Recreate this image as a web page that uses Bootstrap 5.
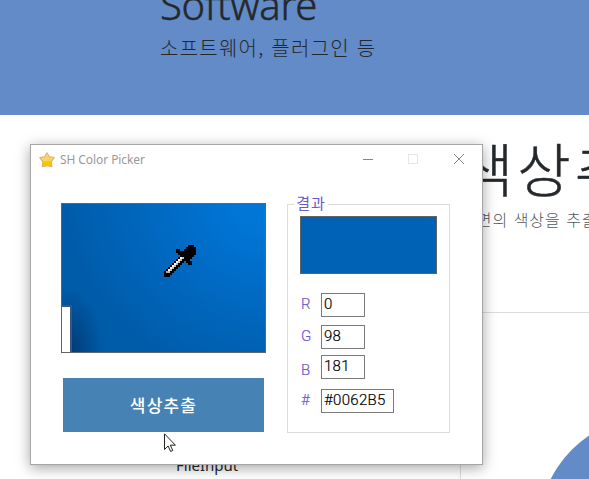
<!DOCTYPE html>
<html lang="ko">
<head>
<meta charset="utf-8">
<meta name="viewport" content="width=device-width, initial-scale=1">
<title>SH Color Picker</title>
<link href="https://cdn.jsdelivr.net/npm/bootstrap@5.3.0/dist/css/bootstrap.min.css" rel="stylesheet">
<style>
body{width:589px;height:479px;font-family:"Noto Sans","Noto Sans CJK KR",sans-serif;font-weight:400;color:#25282b}
.page{height:479px}
.hero{height:115px;background:#628bc7;padding-left:160px}
.hero h1{font-size:40px;line-height:48px;font-weight:300;-webkit-text-stroke:.5px #25282b;margin:-19px 0 0;letter-spacing:-.3px;white-space:nowrap}
.hero p{font-family:"Noto Sans CJK KR",sans-serif;font-size:20px;line-height:30px;margin:4px 0 0;white-space:nowrap;font-weight:300;letter-spacing:1.25px}
.side{width:461px}
.side-item{font-size:15px;line-height:24px;margin:338px 0 0 176px;letter-spacing:0}
.side-line{height:16px;width:1px;background:#dcdcdc;margin-left:460px;margin-top:-14px}
.content{min-width:0}
.content h2{font-family:"Noto Sans CJK KR",sans-serif;font-size:58px;line-height:70px;font-weight:300;-webkit-text-stroke:.5px #25282b;white-space:nowrap;margin:17px 0 0 -1px;letter-spacing:4px}
.content .desc{font-family:"Noto Sans CJK KR",sans-serif;font-size:16px;line-height:24px;font-weight:300;color:#50575e;white-space:nowrap;margin:5px 0 0 0;letter-spacing:1px}
.rule{height:1px;background:#dcdcdc;margin-top:81px}
.disc{width:234px;height:234px;border-radius:50%;background:#628bc7;margin:102px 0 0 77px}
.win{position:absolute;left:30px;top:144px;width:453px;height:321px;background:#fff;border:1px solid #a6a6a6;box-shadow:0 3px 13px rgba(0,0,0,.36)}
.titlebar{height:29px;padding-left:8px;font-size:12px;color:#999}
.titlebar .name{margin-left:5px;letter-spacing:-.08px}
.preview{width:205px;height:150px;border:1px solid #646464;background:radial-gradient(ellipse 32px 60px at 8px 145px,rgba(0,40,90,.6),rgba(0,60,120,0)),radial-gradient(ellipse 250px 230px at 215px -15px,#0079dc 0%,#0075d5 20%,#006bc5 45%,#0063b6 66%,#005cab 85%,#005aa6 100%)}
.notch{width:10px;height:47px;background:#fff;border:solid #38577a;border-width:2px 2px 0 0}
.pick{width:201px;height:54px;background:#4682b4;border-radius:0;border:0;font:500 17px/52px "Noto Sans CJK KR",sans-serif;letter-spacing:1.2px;margin:25px 0 0 2px;padding:0}
.left-col{padding:29px 0 0 30px;width:256px}
.group{width:163px;height:229px;border:1px solid #dcdcdc;margin-top:30px;padding:11px 0 0 12px}
.group legend{position:absolute;left:263px;top:49px;width:34px;height:17px;background:#fff;font:400 15px/17px "Noto Sans CJK KR",sans-serif;color:#6a5acd;text-align:center;margin:0;letter-spacing:1px}
.swatch{width:137px;height:58px;background:#0062b5;border:1px solid #646464;margin-bottom:19px}
.line{height:24px;font-family:Roboto,sans-serif;font-size:15px;font-weight:300}
.line label{width:21px;color:#6a5acd;-webkit-text-stroke:.2px #6a5acd;padding-left:1px;line-height:22px}
.line input{width:44px;height:24px;border:1px solid #7a7a7a;border-radius:0;padding:0 0 3px 2px;font-size:15px;font-weight:300;-webkit-text-stroke:.2px #000;line-height:20px;color:#000;font-family:inherit;min-height:0;letter-spacing:.3px}
.line input.hex{width:73px}
.gap-g{margin-top:8px}
.gap-b{margin-top:6px}
.gap-x{margin-top:10px}
.dropper{position:absolute;left:164px;top:245px}
.pointer{position:absolute;left:164px;top:433px}
</style>
</head>
<body class="bg-white overflow-hidden m-0">
<div class="page overflow-hidden">
  <header class="hero overflow-hidden"><h1>Software</h1><p>소프트웨어, 플러그인 등</p></header>
  <div class="d-flex">
    <aside class="side flex-shrink-0"><div class="side-item">FileInput</div><div class="side-line"></div></aside>
    <main class="content flex-grow-1"><h2>색상추출</h2><p class="desc mb-0">화면의 색상을 추출</p><div class="rule"></div><div class="disc"></div></main>
  </div>
</div>
<section class="win">
  <div class="titlebar d-flex align-items-center">
    <svg width="16" height="16" viewBox="0 0 16 16"><defs><linearGradient id="g" x2="0" y2="1"><stop stop-color="#f5d883"/><stop offset=".55" stop-color="#f8d35a"/><stop offset=".65" stop-color="#f8c800"/><stop offset="1" stop-color="#f2c100"/></linearGradient></defs><path d="M8 .8 10.3 4.800 15.3 5.600 12.300 9.6 12.8 14.7 8 13.800 3.2 14.7 3.700 9.6.7 5.600 5.7 4.800Z" fill="url(#g)" stroke="#dfb26a" stroke-width="1.1" stroke-linejoin="round"/></svg>
    <span class="name">SH Color Picker</span>
    <svg class="ms-auto" width="121" height="29" fill="none"><path d="M2 14.5h10" stroke="#888"/><rect x="47.500" y="9.500" width="9" height="9" stroke="#e6e6e6"/><path d="m93 9 10 10m0-10-10 10" stroke="#888"/></svg>
  </div>
  <div class="d-flex">
    <div class="left-col"><div class="preview d-flex align-items-end"><div class="notch"></div></div><button class="pick btn btn-primary">색상추출</button></div>
    <form class="group"><legend>결과</legend><div class="swatch"></div>
      <div class="line d-flex"><label>R</label><input class="form-control" value="0"></div>
      <div class="line gap-g d-flex"><label>G</label><input class="form-control" value="98"></div>
      <div class="line gap-b d-flex"><label class="pt-1">B</label><input class="form-control" value="181"></div>
      <div class="line gap-x d-flex"><label>#</label><input class="form-control hex" value="#0062B5"></div>
    </form>
  </div>
</section>
<svg class="dropper" width="32" height="32" viewBox="0 0 16 16" shape-rendering="crispEdges"><path d="M12 0h3v1h1v4h-1v1h-1v1h-1v1h1v2h-2v-1h-1v-1h-1v1H9v1H8v1H7v1H6v1H5v1H4v1H3v1H0v-3h1v-1h1v-1h1v-1h1V9h1V8h1V7h1V6h1V5H7V4H6V2h2v1h2V2h1V1h1Z"/><path d="M1 13h1v-1h1v-1h1v-1h1V9h1V8h1V7h1V6h2v1H9v1H8v1H7v1H6v1H5v1H4v1H3v1H1Z" fill="#aaa"/><path d="M2 12h1v-1h1v-1h1V9h1V8h1V7h1V6h2v1H9v1H8v1H7v1H6v1H5v1H4v1H3v1H2Z" fill="#bbb"/><path d="M2 12h1v1H2zm1-1h1v1H3zm1-1h1v1H4zm1-1h1v1H5zm1-1h1v1H6zm1-1h1v1H7zm1-1h1v1H8z" fill="#fff"/></svg>
<svg class="pointer" width="13" height="21" viewBox="0 0 13 21"><path d="M.5.8v15.700l3.600-3.500 2.500 5.500 2.200-1-2.500-5.300h5.100Z" fill="#fff" stroke="#222"/></svg>
</body>
</html>
